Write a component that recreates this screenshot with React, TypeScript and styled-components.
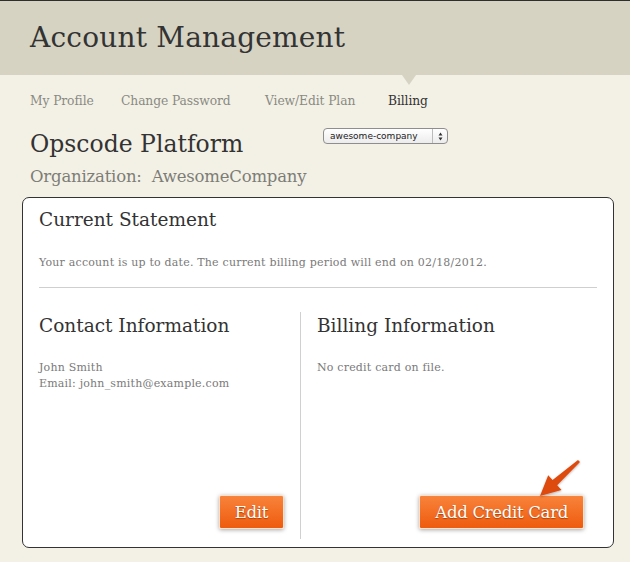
import React from "react";
import styled, { createGlobalStyle } from "styled-components";

const Global = createGlobalStyle`
  html, body { margin: 0; padding: 0; background: #f3f1e6; }
  body { font-family: "DejaVu Serif", "Liberation Serif", serif; color: #333; }
  * { box-sizing: border-box; }
`;

const Page = styled.div`
  width: 630px;
  height: 562px;
  overflow: hidden;
  border-top: 1px solid #2e2e2e;
  background: #f3f1e6;
`;

const Header = styled.header`
  position: relative;
  height: 74px;
  background: #d6d3c3;
  padding: 20px 0 0 30px;
`;

const Title = styled.h1`
  margin: 0;
  font-weight: normal;
  font-size: 28px;
  line-height: 34px;
  letter-spacing: 0.2px;
  color: #333;
`;

const Pointer = styled.span<{ $left: number }>`
  position: absolute;
  left: ${(p) => p.$left}px;
  bottom: -10px;
  width: 0;
  height: 0;
  border-left: 7px solid transparent;
  border-right: 7px solid transparent;
  border-top: 10px solid #d6d3c3;
`;

const Nav = styled.nav`
  display: flex;
  padding: 18px 0 0 30px;
  height: 46px;
`;

const NavItem = styled.a<{ $active?: boolean; $w: number }>`
  width: ${(p) => p.$w}px;
  font-size: 12.3px;
  line-height: 16px;
  letter-spacing: -0.1px;
  color: ${(p) => (p.$active ? "#333" : "#8a8a82")};
  text-decoration: none;
  white-space: nowrap;
`;

const Intro = styled.section`
  display: grid;
  grid-template-columns: 293px auto;
  padding: 8px 0 0 30px;
`;

const Platform = styled.h2`
  margin: 0;
  font-weight: normal;
  font-size: 23.5px;
  line-height: 30px;
  color: #333;
`;

const Select = styled.div`
  align-self: start;
  margin-top: -1px;
  width: 125px;
  height: 16px;
  display: flex;
  border: 1px solid #8e8e8e;
  border-radius: 4px;
  background: linear-gradient(#ffffff, #ececec);
  font-family: "DejaVu Sans", "Liberation Sans", sans-serif;
  font-size: 9px;
  line-height: 14px;
  color: #222;
  overflow: hidden;
`;

const SelectLabel = styled.span`
  flex: 1;
  padding-left: 6px;
`;

const SelectArrows = styled.span`
  width: 15px;
  border-left: 1px solid #bbb;
  display: flex;
  align-items: center;
  justify-content: center;
`;

const Org = styled.div`
  grid-column: 1 / -1;
  margin-top: 8px;
  font-size: 16.5px;
  line-height: 20px;
  color: #7d7d76;
  letter-spacing: -0.2px;
`;

const Card = styled.main`
  margin: 10px 0 0 22px;
  width: 592px;
  height: 351px;
  background: #fff;
  border: 1.5px solid #333;
  border-radius: 7px;
  padding: 10px 16px 8px 16px;
  display: flex;
  flex-direction: column;
`;

const SectionTitle = styled.h3`
  margin: 0;
  font-weight: normal;
  font-size: 18.5px;
  line-height: 24px;
  color: #333;
  white-space: nowrap;
`;

const Small = styled.p`
  margin: 0;
  font-size: 11px;
  line-height: 16px;
  color: #7a7a7a;
  letter-spacing: 0.2px;
  white-space: nowrap;
`;

const Statement = styled.div`
  padding-bottom: 16px;
  border-bottom: 1px solid #cfcfcf;
  ${Small} { margin-top: 23px; }
`;

const Columns = styled.div`
  flex: 1;
  display: grid;
  grid-template-columns: 261px 1fr;
  margin-top: 24px;
`;

const Column = styled.div<{ $divider?: boolean }>`
  position: relative;
  display: flex;
  flex-direction: column;
  padding-left: ${(p) => (p.$divider ? "16px" : "0")};
  padding-right: ${(p) => (p.$divider ? "13px" : "16px")};
  border-left: ${(p) => (p.$divider ? "1px solid #d0d0d0" : "none")};
  padding-top: 2px;
  padding-bottom: 10px;
`;

const Details = styled.div`
  margin-top: 22px;
  flex: 1;
`;

const Button = styled.button`
  align-self: flex-end;
  height: 34px;
  padding: 0 15px;
  border: 1px solid #fde0cc;
  border-radius: 2px;
  background: linear-gradient(#f8833b, #ee5b0e);
  box-shadow: 0 1px 4px rgba(0, 0, 0, 0.35);
  color: #fff;
  font-family: "DejaVu Serif", "Liberation Serif", serif;
  font-size: 16.5px;
  letter-spacing: -0.3px;
  text-shadow: 0 1px 1px rgba(120, 40, 0, 0.6);
  white-space: nowrap;
`;

const Arrow = styled.svg`
  position: absolute;
  right: 12px;
  bottom: 37px;
  width: 50px;
  height: 46px;
  overflow: visible;
`;

export default function App() {
  return (
    <Page>
      <Global />
      <Header>
        <Title>Account Management</Title>
        <Pointer $left={402} />
      </Header>
      <Nav>
        <NavItem $w={91}>My Profile</NavItem>
        <NavItem $w={144}>Change Password</NavItem>
        <NavItem $w={123}>View/Edit Plan</NavItem>
        <NavItem $w={60} $active>
          Billing
        </NavItem>
      </Nav>
      <Intro>
        <Platform>Opscode Platform</Platform>
        <Select>
          <SelectLabel>awesome-company</SelectLabel>
          <SelectArrows>
            <svg width="5" height="9" viewBox="0 0 5 9">
              <path d="M2.5 0.5 L4.5 3.5 H0.5 Z M2.5 8.5 L4.5 5.5 H0.5 Z" fill="#333" />
            </svg>
          </SelectArrows>
        </Select>
        <Org>Organization:&nbsp; AwesomeCompany</Org>
      </Intro>
      <Card>
        <Statement>
          <SectionTitle>Current Statement</SectionTitle>
          <Small>Your account is up to date. The current billing period will end on 02/18/2012.</Small>
        </Statement>
        <Columns>
          <Column>
            <SectionTitle>Contact Information</SectionTitle>
            <Details>
              <Small>John Smith</Small>
              <Small>Email: john_smith@example.com</Small>
            </Details>
            <Button>Edit</Button>
          </Column>
          <Column $divider>
            <SectionTitle>Billing Information</SectionTitle>
            <Details>
              <Small>No credit card on file.</Small>
            </Details>
            <Button>Add Credit Card</Button>
            <Arrow viewBox="0 0 50 46">
              <defs>
                <filter id="as" x="-30%" y="-30%" width="160%" height="160%">
                  <feDropShadow dx="0" dy="1" stdDeviation="1" floodColor="#000" floodOpacity="0.3" />
                </filter>
              </defs>
              <path
                d="M5 40 L13.2 19.2 L17.6 24 L43 3.9 L45 6.1 L22.2 29.2 L26.6 34 Z"
                fill="#de4a10"
                filter="url(#as)"
              />
            </Arrow>
          </Column>
        </Columns>
      </Card>
    </Page>
  );
}
